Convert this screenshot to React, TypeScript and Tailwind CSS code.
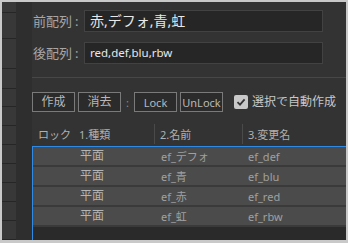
import React from "react";

const stripRows = [11, 26, 30, 20, 18, 19, 19, 19, 19, 19, 19, 19];

const rows = [
  { kind: "平面", name: "ef_デフォ", rename: "ef_def" },
  { kind: "平面", name: "ef_青", rename: "ef_blu" },
  { kind: "平面", name: "ef_赤", rename: "ef_red" },
  { kind: "平面", name: "ef_虹", rename: "ef_rbw" },
];

function Btn({ children, small }: { children: React.ReactNode; small?: boolean }) {
  return (
    <div
      className={
        "w-[43px] h-[20px] border border-[#7a7a7a] bg-[#2b2b2b] flex items-center justify-center text-[#b8b8b8] leading-none whitespace-nowrap " +
        (small ? "text-[11px]" : "text-[12px]")
      }
    >
      {children}
    </div>
  );
}

export default function App() {
  return (
    <div className="w-[348px] h-[243px] bg-[#c9c9c9] pl-[2px] pt-[2px] pr-[2px] pb-[3px] font-['Noto_Sans','Noto_Sans_CJK_JP',sans-serif] overflow-hidden">
      <div className="flex h-full w-full">
        {/* left strip */}
        <div className="w-[14px] bg-[#383838] flex flex-col">
          {stripRows.map((h, i) => (
            <div key={i} className="border-b border-[#262626] shrink-0" style={{ height: h }} />
          ))}
        </div>
        <div className="w-[16px] bg-[#2e2e2e]" />
        {/* main */}
        <div className="flex-1 bg-[#333333] flex flex-col min-w-0">
          <div className="pt-[8px] flex items-center">
            <div className="w-[52px] pl-[1px] text-[13px] text-[#a6a6a6] leading-none whitespace-nowrap">
              前配列<span className="ml-[3px]">:</span>
            </div>
            <div className="w-[239px] h-[22px] bg-[#262626] border border-[#424242] flex items-center pl-[5px] text-[14px] text-[#e8e8e8] leading-none whitespace-nowrap">
              赤,デフォ,青,虹
            </div>
          </div>
          <div className="mt-[10px] flex items-center">
            <div className="w-[52px] pl-[1px] text-[13px] text-[#a6a6a6] leading-none whitespace-nowrap">
              後配列<span className="ml-[3px]">:</span>
            </div>
            <div className="w-[239px] h-[22px] bg-[#262626] border border-[#424242] flex items-center pl-[5px] text-[11.5px] text-[#e8e8e8] leading-none whitespace-nowrap">
              red,def,blu,rbw
            </div>
          </div>
          <div className="mt-[13px] h-[1px] bg-[#474747]" />
          <div className="mt-[14px] h-[20px] flex items-center">
            <Btn>作成</Btn>
            <div className="w-[3px]" />
            <Btn>消去</Btn>
            <div className="w-[13px] text-center text-[11px] text-[#8a8a8a] leading-none">:</div>
            <Btn small>Lock</Btn>
            <div className="w-[3px]" />
            <Btn small>UnLock</Btn>
            <div className="ml-[11px] w-[14px] h-[14px] rounded-[2px] bg-[#c8c8c8] flex items-center justify-center">
              <svg width="10" height="10" viewBox="0 0 10 10">
                <path d="M1.5 5.2 L4 7.6 L8.6 2.4" stroke="#333" strokeWidth="1.8" fill="none" />
              </svg>
            </div>
            <div className="ml-[4px] text-[12px] text-[#c8c8c8] leading-none whitespace-nowrap">選択で自動作成</div>
          </div>
          {/* header */}
          <div className="mt-[12px] h-[20px] flex items-center text-[11px] text-[#b0b0b0] leading-none whitespace-nowrap">
            <div className="w-[43px] pl-[6px]">ロック</div>
            <div className="w-[79px] pl-[4px]">1.種類</div>
            <div className="w-[88px] h-full border-l border-[#4a4a4a] pl-[5px] flex items-center">2.名前</div>
            <div className="flex-1 h-full border-l border-[#4a4a4a] pl-[5px] flex items-center">3.変更名</div>
          </div>
          {/* table */}
          <div className="mt-[2px] flex-1 bg-[#2a2a2a] border-l border-t border-[#2f8ae5] flex flex-col">
            {rows.map((r, i) => (
              <div key={i} className="h-[20px] shrink-0 bg-[#4b4b4b] border-b-2 border-[#3a3a3a] flex items-center text-[11px] text-[#a0a0a0] leading-none whitespace-nowrap">
                <div className="w-[42px]" />
                <div className="w-[79px] pl-[5px] text-[12px] text-[#b4b4b4]">{r.kind}</div>
                <div className="w-[88px] pl-[7px]">{r.name}</div>
                <div className="flex-1 pl-[6px]">{r.rename}</div>
              </div>
            ))}
          </div>
        </div>
      </div>
    </div>
  );
}
